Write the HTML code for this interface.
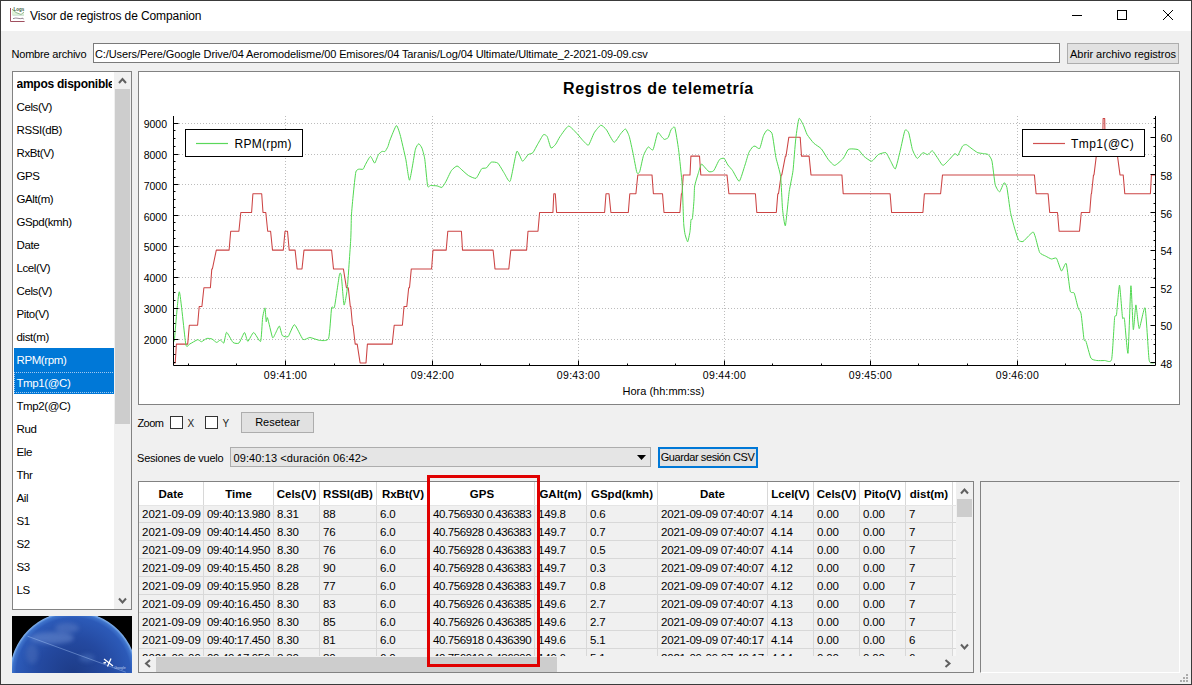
<!DOCTYPE html>
<html><head><meta charset="utf-8"><style>
*{box-sizing:border-box}
html,body{margin:0;padding:0}
body{width:1192px;height:685px;overflow:hidden;position:relative;background:#f0f0f0;font-family:"Liberation Sans",sans-serif;color:#000}
.a{position:absolute}
.t{position:absolute;white-space:nowrap;font-size:11px;line-height:13px}
.tk{font-family:"Liberation Sans",sans-serif;font-size:10.5px;fill:#000}
.tx{letter-spacing:0.3px}
.ttl{font-family:"Liberation Sans",sans-serif;font-size:16px;font-weight:bold;fill:#000;letter-spacing:0.6px}
.lg{font-family:"Liberation Sans",sans-serif;font-size:12px;fill:#000}
.li{position:absolute;left:0;width:101px;height:23px;line-height:23px;padding-left:2.5px;padding-top:1px;font-size:11.5px;letter-spacing:-0.4px;white-space:nowrap;overflow:hidden}
.li.hd{letter-spacing:-0.25px;font-size:12px}
.li.hd{font-weight:bold}
.li.sel{background:#0078d7;color:#fff}
.th{position:absolute;top:0;height:23px;line-height:23px;padding-top:1px;text-align:center;font-weight:bold;font-size:11.5px;white-space:nowrap;background:#fff}
.td{position:absolute;height:17px;line-height:17px;padding-left:3px;padding-top:1px;font-size:11.5px;white-space:nowrap;overflow:hidden;letter-spacing:-0.2px}
.vg{position:absolute;top:0;width:1px;height:180px;background:#d8d8d8}
.hg{position:absolute;left:0;width:817px;height:1px;background:#d8d8d8}
.sb{position:absolute;background:#f0f0f0}
.btn{position:absolute;background:#e1e1e1;border:1px solid #adadad;font-size:11px;text-align:center;white-space:nowrap}
</style></head><body>
<!-- window border -->
<div class="a" style="left:0;top:0;width:1192px;height:685px;border:1px solid #3a3a3a"></div>
<!-- title bar -->
<div class="a" style="left:1px;top:1px;width:1190px;height:30px;background:#fff"></div>
<svg class="a" style="left:0;top:0" width="1192" height="40">
  <path d="M12,9 L16,12.5 L21,14.5 L24,12 L24,15 L12,15Z" fill="#d8f0d0" opacity="0.8"/>
  <path d="M12,9 L16,12.5 L21,14.5 L24,12" stroke="#6a9a6a" fill="none" stroke-width="0.7"/>
  <text x="13.5" y="11.3" style="font-family:'Liberation Sans';font-size:4.5px;font-weight:bold" fill="#3a5a3a">Logs</text>
  <path d="M12.5,15.3 L24,15.3" stroke="#b8d0c0" fill="none" stroke-width="0.7"/>
  <path d="M13,18.6 Q16,17.6 18,18.3 T23,18.2 L23.5,19.3" stroke="#6a5868" fill="none" stroke-width="0.7"/>
  <path d="M10.5,8 V21.5 H24.6" stroke="#a05060" fill="none" stroke-width="1"/>
  <path d="M1072,15.5 H1082" stroke="#000" stroke-width="1"/>
  <rect x="1117.5" y="10.5" width="9" height="9" fill="none" stroke="#000" stroke-width="1"/>
  <path d="M1163,10 L1173,20 M1173,10 L1163,20" stroke="#000" stroke-width="1"/>
</svg>
<div class="t" style="left:30px;top:9px;font-size:12px;line-height:14px;letter-spacing:-0.1px">Visor de registros de Companion</div>

<!-- file row -->
<div class="t" style="left:11.5px;top:48px;letter-spacing:-0.2px">Nombre archivo</div>
<div class="a" style="left:93px;top:43px;width:967px;height:20px;background:#fff;border:1px solid #7a7a7a"></div>
<div class="t" style="left:95px;top:48px;letter-spacing:-0.1px">C:/Users/Pere/Google Drive/04 Aeromodelisme/00 Emisores/04 Taranis/Log/04 Ultimate/Ultimate_2-2021-09-09.csv</div>
<div class="btn" style="left:1067px;top:43px;width:112px;height:21px;line-height:21px;letter-spacing:-0.05px">Abrir archivo registros</div>

<!-- list -->
<div class="a" style="left:12px;top:71px;width:120px;height:539px;background:#fff;border:1px solid #828282;overflow:hidden">
 <div class="a" style="left:1px;top:0;width:101px;height:537px;overflow:hidden">
<div class="li hd" style="top:0px"><span style="display:inline-block;width:95px;overflow:hidden;vertical-align:top">ampos disponible</span></div>
<div class="li" style="top:23px">Cels(V)</div>
<div class="li" style="top:46px">RSSI(dB)</div>
<div class="li" style="top:69px">RxBt(V)</div>
<div class="li" style="top:92px">GPS</div>
<div class="li" style="top:115px">GAlt(m)</div>
<div class="li" style="top:138px">GSpd(kmh)</div>
<div class="li" style="top:161px">Date</div>
<div class="li" style="top:184px">Lcel(V)</div>
<div class="li" style="top:207px">Cels(V)</div>
<div class="li" style="top:230px">Pito(V)</div>
<div class="li" style="top:253px">dist(m)</div>
<div class="li sel" style="top:276px">RPM(rpm)</div>
<div class="li sel" style="top:299px">Tmp1(@C)</div>
<div class="a" style="left:0;top:300px;width:101px;height:21px;border:1px dotted #a0c8f0"></div>
<div class="li" style="top:322px">Tmp2(@C)</div>
<div class="li" style="top:345px">Rud</div>
<div class="li" style="top:368px">Ele</div>
<div class="li" style="top:391px">Thr</div>
<div class="li" style="top:414px">Ail</div>
<div class="li" style="top:437px">S1</div>
<div class="li" style="top:460px">S2</div>
<div class="li" style="top:483px">S3</div>
<div class="li" style="top:506px">LS</div>
<div class="li" style="top:529px">SA</div>
 </div>
 <div class="sb" style="left:101px;top:0;width:17px;height:537px"></div>
 <div class="a" style="left:102px;top:17px;width:15px;height:335px;background:#cdcdcd"></div>
 <svg class="a" style="left:101px;top:0" width="17" height="537">
  <path d="M5,11 L8.5,7 L12,11" stroke="#606060" stroke-width="2" fill="none"/>
  <path d="M5,526.5 L8.5,530.5 L12,526.5" stroke="#606060" stroke-width="2" fill="none"/>
 </svg>
</div>
<!-- globe -->
<svg class="a" style="left:12px;top:616px" width="120" height="57">
 <defs>
  <radialGradient id="gl" cx="61.4" cy="59" r="63.7" gradientUnits="userSpaceOnUse">
   <stop offset="0" stop-color="#1d3b86"/>
   <stop offset="0.55" stop-color="#2449a0"/>
   <stop offset="0.9" stop-color="#2c5ab8"/>
   <stop offset="0.96" stop-color="#3f74cc"/>
   <stop offset="1" stop-color="#8cbcf4"/>
  </radialGradient>
  <filter id="bl" x="-50%" y="-50%" width="200%" height="200%"><feGaussianBlur stdDeviation="2"/></filter>
  <clipPath id="gc"><circle cx="61.4" cy="59" r="63"/></clipPath>
 </defs>
 <rect width="120" height="57" fill="#000"/>
 <circle cx="61.4" cy="59" r="63.7" fill="url(#gl)"/>
 <g clip-path="url(#gc)" filter="url(#bl)" opacity="0.55">
  <ellipse cx="40" cy="22" rx="22" ry="6" fill="#6a8cd0"/>
  <ellipse cx="55" cy="12" rx="12" ry="5" fill="#5a7cc4"/>
  <ellipse cx="20" cy="38" rx="6" ry="10" fill="#4a6cb8"/>
  <ellipse cx="75" cy="42" rx="8" ry="4" fill="#4a70bc"/>
 </g>
 <path d="M15.6,20.2 L113.8,56.2" stroke="#b0d0ff" stroke-width="0.5" opacity="0.8"/>
 <path d="M92,43 L101,50 M95.5,50.5 L99,42.5 M91.5,47 L94,46.5" stroke="#fff" stroke-width="1.3"/>
 <text x="108" y="53" style="font-family:'Liberation Sans';font-size:3.5px" fill="#c0d0f0" text-anchor="middle">Google</text>
</svg>

<!-- chart -->
<svg class="a" style="left:0;top:0" width="1192" height="685">
<rect x="138.5" y="71.5" width="1041" height="333" fill="#fff" stroke="#828282" stroke-width="1"/>
<line x1="285.5" y1="116" x2="285.5" y2="365.5" stroke="#bcbcbc" stroke-width="1" stroke-dasharray="1,2"/>
<line x1="432.5" y1="116" x2="432.5" y2="365.5" stroke="#bcbcbc" stroke-width="1" stroke-dasharray="1,2"/>
<line x1="578.5" y1="116" x2="578.5" y2="365.5" stroke="#bcbcbc" stroke-width="1" stroke-dasharray="1,2"/>
<line x1="724.5" y1="116" x2="724.5" y2="365.5" stroke="#bcbcbc" stroke-width="1" stroke-dasharray="1,2"/>
<line x1="870.5" y1="116" x2="870.5" y2="365.5" stroke="#bcbcbc" stroke-width="1" stroke-dasharray="1,2"/>
<line x1="1017.5" y1="116" x2="1017.5" y2="365.5" stroke="#bcbcbc" stroke-width="1" stroke-dasharray="1,2"/>
<line x1="173" y1="123.5" x2="1155.5" y2="123.5" stroke="#bcbcbc" stroke-width="1" stroke-dasharray="1,2"/>
<line x1="173" y1="154.5" x2="1155.5" y2="154.5" stroke="#bcbcbc" stroke-width="1" stroke-dasharray="1,2"/>
<line x1="173" y1="184.5" x2="1155.5" y2="184.5" stroke="#bcbcbc" stroke-width="1" stroke-dasharray="1,2"/>
<line x1="173" y1="215.5" x2="1155.5" y2="215.5" stroke="#bcbcbc" stroke-width="1" stroke-dasharray="1,2"/>
<line x1="173" y1="246.5" x2="1155.5" y2="246.5" stroke="#bcbcbc" stroke-width="1" stroke-dasharray="1,2"/>
<line x1="173" y1="277.5" x2="1155.5" y2="277.5" stroke="#bcbcbc" stroke-width="1" stroke-dasharray="1,2"/>
<line x1="173" y1="308.5" x2="1155.5" y2="308.5" stroke="#bcbcbc" stroke-width="1" stroke-dasharray="1,2"/>
<line x1="173" y1="339.5" x2="1155.5" y2="339.5" stroke="#bcbcbc" stroke-width="1" stroke-dasharray="1,2"/>
<path d="M173.5,362.9 L175.2,362.9 L176.4,344.1 L187.7,344.1 L189.3,325.3 L197.6,325.3 L199.2,306.5 L201.9,306.5 L203.9,287.7 L210.4,287.7 L211.8,268.9 L212.4,268.9 L216.3,250.1 L229.1,250.1 L230.7,231.3 L238.9,231.3 L240.8,212.5 L251.6,212.5 L252.9,193.7 L261.7,193.7 L263.0,212.5 L265.8,212.5 L267.7,231.3 L270.6,231.3 L272.5,250.1 L283.3,250.1 L285.0,231.3 L287.5,231.3 L289.2,250.1 L295.1,250.1 L297.1,268.9 L302.0,268.9 L304.0,250.1 L331.6,250.1 L333.5,268.9 L343.4,268.9 L346.4,287.7 L348.3,287.7 L350.3,306.5 L350.8,306.5 L352.5,325.3 L353.0,325.3 L355.2,344.1 L357.2,344.1 L360.1,362.9 L366.0,362.9 L367.4,344.1 L392.2,344.1 L394.2,325.3 L402.4,325.3 L404.0,306.5 L406.8,306.5 L408.7,287.7 L409.5,287.7 L411.3,268.9 L431.6,268.9 L433.0,250.1 L446.2,250.1 L447.8,231.3 L461.4,231.3 L462.5,250.1 L493.1,250.1 L495.0,268.9 L508.8,268.9 L510.8,250.1 L526.6,250.1 L528.0,231.3 L538.0,231.3 L539.6,212.5 L552.9,212.5 L553.8,193.7 L555.3,193.7 L556.6,212.5 L604.6,212.5 L606.0,193.7 L609.0,193.7 L610.9,212.5 L628.3,212.5 L629.8,193.7 L635.9,193.7 L637.8,174.9 L652.0,174.9 L653.4,193.7 L662.5,193.7 L664.0,212.5 L679.9,212.5 L681.4,193.7 L682.0,193.7 L683.3,174.9 L690.0,174.9 L690.9,156.1 L699.5,156.1 L700.8,174.9 L727.0,174.9 L728.9,193.7 L755.4,193.7 L756.8,212.5 L776.3,212.5 L777.8,193.7 L778.5,193.7 L781.2,174.9 L781.8,174.9 L785.4,156.1 L786.0,156.1 L788.8,137.3 L800.2,137.3 L801.5,156.1 L809.1,156.1 L811.0,174.9 L841.9,174.9 L843.2,193.7 L890.1,193.7 L891.6,212.5 L922.9,212.5 L924.4,193.7 L940.6,193.7 L942.5,174.9 L1034.4,174.9 L1036.1,193.7 L1048.1,193.7 L1049.7,212.5 L1057.5,212.5 L1059.1,231.3 L1079.5,231.3 L1081.3,212.5 L1089.7,212.5 L1091.2,193.7 L1091.5,193.7 L1093.5,174.9 L1094.0,174.9 L1096.3,156.1 L1097.0,156.1 L1102.6,137.3 L1102.8,137.3 L1103.1,118.5 L1104.7,118.5 L1105.0,137.3 L1105.2,137.3 L1117.0,156.1 L1117.5,156.1 L1120.0,174.9 L1123.2,174.9 L1124.8,193.7 L1150.4,193.7 L1151.4,174.9 L1155.0,174.9" fill="none" stroke="#cc4444" stroke-width="1.05" stroke-linejoin="round"/>
<path d="M174.3,341.4C174.8,336.9 178.2,291.5 179.3,291.8C180.4,292.1 184.8,339.5 185.8,344.3C186.8,349.1 188.6,344.4 189.7,344.0C190.8,343.6 196.5,339.9 197.6,339.7C198.7,339.5 200.7,341.8 201.5,341.7C202.3,341.6 205.8,338.6 206.8,338.4C207.8,338.2 211.1,338.6 212.0,339.0C212.9,339.4 215.8,342.3 216.6,342.4C217.4,342.5 219.8,339.9 220.5,340.0C221.2,340.1 223.2,343.7 223.8,343.0C224.4,342.3 225.8,332.4 226.6,332.3C227.4,332.2 231.9,341.4 233.0,342.4C234.1,343.4 237.9,343.9 239.0,343.0C240.1,342.1 243.7,332.6 244.5,332.5C245.3,332.4 247.0,341.4 247.8,341.4C248.6,341.4 252.5,332.5 253.7,332.5C254.9,332.5 259.8,342.7 260.6,341.4C261.4,340.1 262.2,320.9 262.6,317.8C263.0,314.7 264.7,307.5 265.0,307.9C265.3,308.3 266.0,320.8 266.2,321.7C266.4,322.6 266.9,316.4 267.5,317.8C268.1,319.2 271.8,336.1 272.5,337.5C273.2,338.9 274.8,334.6 275.4,333.5C276.0,332.4 278.8,325.8 279.4,326.0C280.0,326.2 281.5,334.5 282.3,335.5C283.1,336.5 287.1,337.5 288.2,336.5C289.3,335.5 293.1,324.4 294.5,324.7C295.9,325.0 301.6,338.2 303.0,339.4C304.4,340.6 308.4,337.4 309.9,337.5C311.4,337.6 318.1,340.3 319.8,340.4C321.5,340.5 327.5,341.4 328.6,338.4C329.7,335.4 331.1,310.8 331.6,307.9C332.1,305.0 333.8,310.0 334.5,306.9C335.2,303.8 338.9,277.2 339.5,274.4C340.1,271.6 341.0,273.6 341.4,276.4C341.8,279.2 343.5,303.9 344.0,305.0C344.5,306.1 346.7,294.2 347.3,288.2C347.9,282.2 350.3,246.6 350.7,240.0C351.1,233.4 351.2,220.1 351.4,215.9C351.6,211.7 352.9,198.0 353.3,194.0C353.7,190.0 355.3,174.4 355.8,172.1C356.3,169.8 358.0,169.5 358.7,169.2C359.4,168.9 362.5,169.6 363.1,169.2C363.7,168.8 364.6,166.0 365.3,164.8C366.0,163.6 369.5,156.6 370.4,156.4C371.3,156.2 374.0,163.3 374.7,163.1C375.4,162.9 377.7,155.7 378.4,154.6C379.1,153.5 381.4,151.7 382.0,151.4C382.6,151.1 384.5,151.9 385.0,151.5C385.5,151.1 387.4,147.7 387.9,146.6C388.4,145.5 389.2,141.9 390.0,140.0C390.8,138.1 395.4,126.1 396.3,125.6C397.2,125.1 399.2,131.6 400.1,134.7C401.0,137.8 404.9,155.1 405.8,159.3C406.7,163.5 408.7,181.1 409.6,180.2C410.5,179.3 414.5,153.1 415.3,149.8C416.1,146.5 418.1,144.0 418.7,143.8C419.3,143.6 421.3,146.6 421.9,148.0C422.5,149.4 424.3,155.8 424.8,159.3C425.3,162.8 427.1,183.5 427.6,185.9C428.1,188.3 429.6,185.5 430.5,185.5C431.4,185.5 436.1,185.7 437.1,185.9C438.1,186.1 441.1,187.7 441.9,187.4C442.7,187.1 444.7,183.6 445.6,182.1C446.5,180.6 450.3,172.2 451.3,170.7C452.3,169.2 456.0,166.1 457.0,166.0C458.0,165.9 460.8,168.9 461.8,169.8C462.8,170.7 467.1,174.7 468.4,175.5C469.7,176.3 474.8,178.9 476.0,178.3C477.2,177.7 480.7,169.8 481.7,168.8C482.7,167.8 485.5,168.5 486.4,167.9C487.3,167.3 490.2,162.6 491.2,162.2C492.2,161.8 496.6,162.1 497.8,163.1C499.0,164.1 503.4,171.9 504.5,173.6C505.6,175.3 509.1,183.2 510.2,181.2C511.3,179.2 515.7,153.2 516.8,151.4C517.9,149.6 521.5,160.9 522.5,161.2C523.5,161.5 527.2,155.4 528.2,154.6C529.2,153.8 532.0,153.7 532.9,152.7C533.8,151.7 536.7,145.8 537.7,144.2C538.7,142.5 542.5,135.4 543.4,134.7C544.3,134.0 546.5,135.4 547.2,136.6C547.9,137.8 550.2,147.3 551.0,148.0C551.8,148.7 554.9,145.2 555.7,144.2C556.5,143.2 558.8,138.3 560.0,136.6C561.2,134.9 566.9,126.4 568.5,126.1C570.1,125.8 575.8,132.4 577.1,133.7C578.4,135.0 581.8,139.4 582.8,140.4C583.8,141.4 587.5,145.8 588.5,145.1C589.5,144.4 593.1,134.6 594.2,132.8C595.3,131.0 599.7,125.5 600.8,125.2C601.9,124.9 605.3,128.3 606.5,129.9C607.7,131.5 612.8,142.0 614.1,142.3C615.4,142.6 619.7,134.9 620.7,133.7C621.7,132.5 624.7,128.7 625.5,129.0C626.3,129.3 628.6,134.3 629.3,136.6C630.0,138.9 632.4,150.3 633.1,153.6C633.8,156.9 636.3,170.9 636.9,172.6C637.5,174.3 639.1,173.3 639.7,171.7C640.3,170.1 642.7,157.8 643.5,155.5C644.3,153.2 647.3,147.5 648.2,147.0C649.1,146.5 652.1,151.1 653.0,149.8C653.9,148.5 656.9,134.0 657.7,132.8C658.5,131.6 660.9,136.0 661.5,136.6C662.1,137.2 663.8,139.3 664.4,139.4C665.0,139.5 667.6,138.4 668.2,137.5C668.8,136.6 670.4,130.8 671.0,129.9C671.6,129.0 674.1,125.7 674.8,127.5C675.5,129.3 677.9,144.5 678.6,149.8C679.3,155.1 681.7,178.2 682.2,185.0C682.7,191.8 683.4,219.1 683.7,223.6C684.0,228.1 684.7,232.8 685.1,234.5C685.5,236.2 687.3,242.1 687.7,241.8C688.1,241.5 689.7,233.5 690.0,231.5C690.3,229.5 690.8,220.9 691.0,219.7C691.2,218.5 692.1,220.5 692.4,218.7C692.7,216.9 693.8,203.0 694.0,200.0C694.2,197.0 694.3,188.4 694.7,185.9C695.1,183.4 697.9,174.6 698.5,172.6C699.1,170.6 700.9,164.6 701.4,164.1C701.9,163.6 703.8,166.3 704.5,167.0C705.2,167.7 708.2,171.4 709.0,171.7C709.8,172.0 712.7,171.8 713.7,170.7C714.7,169.6 718.4,160.8 719.4,159.7C720.4,158.6 723.3,157.9 724.1,158.4C724.9,158.9 727.1,163.9 727.9,165.0C728.7,166.1 731.7,169.2 732.7,170.7C733.7,172.2 738.2,181.7 739.3,181.2C740.4,180.7 744.1,167.6 745.0,165.0C745.9,162.4 748.1,154.3 748.8,152.7C749.5,151.0 752.0,147.6 752.6,147.0C753.2,146.4 754.3,146.0 755.0,146.1C755.7,146.2 758.9,149.5 759.7,148.5C760.5,147.5 762.8,137.3 763.5,135.6C764.2,133.9 766.5,130.1 767.3,129.9C768.1,129.7 771.3,131.2 772.1,133.7C772.9,136.2 775.1,153.5 775.9,157.4C776.7,161.3 780.0,171.7 780.6,176.4C781.2,181.1 782.1,204.2 782.5,208.7C782.9,213.2 784.8,227.3 785.4,225.7C786.0,224.1 788.5,196.6 789.2,191.6C789.9,186.6 792.4,175.6 793.0,170.7C793.6,165.8 795.2,143.3 795.8,138.5C796.3,133.7 798.3,119.7 799.0,118.5C799.7,117.3 802.6,123.7 803.4,125.2C804.2,126.7 806.2,133.0 807.2,134.7C808.2,136.3 812.5,141.9 813.8,143.2C815.1,144.5 820.1,147.4 821.4,148.9C822.7,150.4 826.9,157.8 828.1,159.3C829.3,160.8 833.3,165.5 834.7,165.4C836.1,165.3 842.0,159.8 843.2,158.4C844.4,157.0 847.2,150.7 848.0,149.8C848.8,148.9 850.8,148.9 851.8,148.9C852.8,148.9 857.3,149.1 858.4,149.8C859.5,150.5 862.9,155.5 864.1,156.5C865.3,157.5 870.4,161.4 871.7,161.2C873.0,161.0 877.0,155.4 878.3,154.6C879.6,153.8 884.8,152.1 885.9,152.7C887.0,153.3 889.8,159.7 890.7,161.2C891.6,162.7 894.5,169.8 895.4,168.8C896.3,167.8 899.3,154.3 900.2,150.8C901.1,147.3 904.1,132.2 904.9,130.5C905.7,128.8 908.0,131.0 908.7,132.8C909.4,134.6 911.7,147.5 912.5,149.8C913.3,152.1 916.2,158.1 917.2,158.4C918.2,158.7 921.9,153.0 922.9,152.7C923.9,152.4 926.8,154.8 927.7,154.6C928.6,154.4 931.5,150.5 932.4,150.8C933.3,151.1 936.2,156.1 937.2,157.4C938.2,158.7 941.8,165.2 942.9,165.4C944.0,165.6 948.4,160.4 949.5,159.3C950.6,158.2 954.2,153.9 955.0,153.6C955.8,153.3 957.1,156.2 957.8,155.5C958.5,154.8 961.8,147.0 962.6,146.0C963.4,145.0 965.5,144.4 966.4,144.7C967.3,145.0 971.1,148.2 972.1,148.9C973.1,149.6 976.8,152.3 977.8,152.7C978.8,153.1 982.5,153.4 983.5,153.6C984.5,153.8 987.4,153.9 988.2,154.6C989.0,155.3 991.4,158.4 992.0,161.2C992.6,163.9 994.5,181.8 995.2,184.6C995.9,187.4 998.8,192.1 999.6,191.9C1000.4,191.7 1003.3,183.2 1004.0,182.8C1004.7,182.4 1006.3,184.8 1006.9,187.5C1007.5,190.2 1009.8,208.7 1010.5,212.3C1011.2,215.9 1013.5,224.4 1014.2,226.9C1014.9,229.4 1017.8,238.8 1018.6,240.1C1019.4,241.4 1022.1,241.9 1023.0,241.5C1023.9,241.1 1027.9,236.6 1028.8,235.7C1029.7,234.8 1032.6,231.9 1033.2,232.0C1033.8,232.1 1034.8,235.3 1035.4,237.2C1036.0,239.1 1038.8,250.8 1039.7,252.5C1040.6,254.2 1044.5,255.5 1045.6,256.1C1046.7,256.7 1050.4,258.8 1051.4,259.0C1052.4,259.2 1055.6,257.2 1056.5,258.3C1057.4,259.4 1060.6,270.5 1061.5,271.0C1062.4,271.5 1065.4,261.7 1066.2,263.5C1067.0,265.3 1069.5,288.4 1070.2,291.1C1070.9,293.8 1073.5,291.6 1074.2,293.1C1074.9,294.6 1077.5,306.0 1078.1,307.9C1078.7,309.8 1080.6,310.9 1081.1,313.8C1081.6,316.7 1083.6,336.9 1084.0,339.4C1084.4,341.9 1085.4,339.7 1086.0,341.4C1086.6,343.1 1089.9,356.3 1090.9,358.1C1091.9,359.9 1095.5,360.3 1096.8,360.5C1098.1,360.7 1103.3,360.6 1104.7,360.5C1106.1,360.4 1110.7,363.4 1111.6,359.5C1112.5,355.6 1114.2,321.8 1114.6,317.7C1115.0,313.6 1116.1,317.8 1116.5,314.8C1116.9,311.8 1119.0,284.9 1119.5,285.2C1120.0,285.5 1122.1,314.6 1122.5,317.7C1122.9,320.8 1123.9,315.4 1124.4,318.7C1124.9,322.0 1127.4,356.2 1128.0,353.2C1128.6,350.2 1130.4,288.0 1130.9,285.8C1131.4,283.6 1132.8,327.8 1133.3,329.6C1133.8,331.4 1135.4,305.0 1135.9,304.9C1136.4,304.8 1138.4,328.3 1139.2,328.6C1140.0,328.9 1144.2,305.1 1145.1,307.9C1146.0,310.7 1148.4,354.0 1149.0,359.1C1149.6,364.2 1151.5,362.7 1152.0,363.0C1152.5,363.3 1154.7,362.6 1155.0,362.6" fill="none" stroke="#50d850" stroke-width="1" stroke-linejoin="round"/>
<path d="M173.5,116V365.5H1155.5V116M173.5,362.5h2M173.5,354.5h2M173.5,346.5h2M173.5,339.5h5M173.5,331.5h2M173.5,323.5h2M173.5,315.5h2M173.5,308.5h5M173.5,300.5h2M173.5,292.5h2M173.5,284.5h2M173.5,277.5h5M173.5,269.5h2M173.5,261.5h2M173.5,253.5h2M173.5,246.5h5M173.5,238.5h2M173.5,230.5h2M173.5,222.5h2M173.5,215.5h5M173.5,207.5h2M173.5,199.5h2M173.5,191.5h2M173.5,184.5h5M173.5,177.5h2M173.5,169.5h2M173.5,161.5h2M173.5,154.5h5M173.5,146.5h2M173.5,138.5h2M173.5,130.5h2M173.5,123.5h5M1155.5,362.5h-5M1155.5,353.5h-2M1155.5,344.5h-2M1155.5,334.5h-2M1155.5,325.5h-5M1155.5,315.5h-2M1155.5,306.5h-2M1155.5,297.5h-2M1155.5,287.5h-5M1155.5,278.5h-2M1155.5,268.5h-2M1155.5,259.5h-2M1155.5,250.5h-5M1155.5,240.5h-2M1155.5,231.5h-2M1155.5,221.5h-2M1155.5,212.5h-5M1155.5,203.5h-2M1155.5,193.5h-2M1155.5,184.5h-2M1155.5,174.5h-5M1155.5,165.5h-2M1155.5,156.5h-2M1155.5,146.5h-2M1155.5,137.5h-5M1155.5,127.5h-2M1155.5,118.5h-2M188.5,365.5v-2M236.5,365.5v-2M285.5,365.5v-5M334.5,365.5v-2M383.5,365.5v-2M432.5,365.5v-5M480.5,365.5v-2M529.5,365.5v-2M578.5,365.5v-5M627.5,365.5v-2M675.5,365.5v-2M724.5,365.5v-5M772.5,365.5v-2M821.5,365.5v-2M870.5,365.5v-5M918.5,365.5v-2M967.5,365.5v-2M1017.5,365.5v-5M1065.5,365.5v-2M1114.5,365.5v-2" fill="none" stroke="#000" stroke-width="1"/>
<text x="167" y="128.2" text-anchor="end" class="tk">9000</text>
<text x="167" y="159.0" text-anchor="end" class="tk">8000</text>
<text x="167" y="189.8" text-anchor="end" class="tk">7000</text>
<text x="167" y="220.6" text-anchor="end" class="tk">6000</text>
<text x="167" y="251.4" text-anchor="end" class="tk">5000</text>
<text x="167" y="282.2" text-anchor="end" class="tk">4000</text>
<text x="167" y="313.0" text-anchor="end" class="tk">3000</text>
<text x="167" y="343.8" text-anchor="end" class="tk">2000</text>
<text x="1160.5" y="367.9" class="tk">48</text>
<text x="1160.5" y="330.3" class="tk">50</text>
<text x="1160.5" y="292.7" class="tk">52</text>
<text x="1160.5" y="255.1" class="tk">54</text>
<text x="1160.5" y="217.5" class="tk">56</text>
<text x="1160.5" y="179.9" class="tk">58</text>
<text x="1160.5" y="142.3" class="tk">60</text>
<text x="285.5" y="378.5" text-anchor="middle" class="tk tx">09:41:00</text>
<text x="432.5" y="378.5" text-anchor="middle" class="tk tx">09:42:00</text>
<text x="578.5" y="378.5" text-anchor="middle" class="tk tx">09:43:00</text>
<text x="724.5" y="378.5" text-anchor="middle" class="tk tx">09:44:00</text>
<text x="870.5" y="378.5" text-anchor="middle" class="tk tx">09:45:00</text>
<text x="1017.5" y="378.5" text-anchor="middle" class="tk tx">09:46:00</text>
<text x="663.5" y="395.2" text-anchor="middle" class="tk" style="font-size:11px">Hora (hh:mm:ss)</text>
<text x="658.5" y="93.7" text-anchor="middle" class="ttl">Registros de telemetría</text>
<rect x="185.5" y="129.5" width="117" height="27" fill="#fff" stroke="#000"/>
<line x1="196" y1="143.5" x2="228" y2="143.5" stroke="#5ad85a" stroke-width="1.2"/>
<text x="234.5" y="147.7" class="lg" style="letter-spacing:0.25px">RPM(rpm)</text>
<rect x="1022.5" y="129.5" width="122" height="27" fill="#fff" stroke="#000"/>
<line x1="1033" y1="143.5" x2="1065" y2="143.5" stroke="#d05050" stroke-width="1.2"/>
<text x="1071" y="147.7" class="lg" style="letter-spacing:0.45px">Tmp1(@C)</text>
</svg>

<!-- zoom row -->
<div class="t" style="left:137.5px;top:417px;letter-spacing:-0.6px">Zoom</div>
<div class="a" style="left:170px;top:416px;width:13px;height:13px;background:#fff;border:1px solid #333"></div>
<div class="t" style="left:187.5px;top:417px;font-size:10px;color:#222">X</div>
<div class="a" style="left:205px;top:416px;width:13px;height:13px;background:#fff;border:1px solid #333"></div>
<div class="t" style="left:222.5px;top:417px;font-size:10px;color:#222">Y</div>
<div class="btn" style="left:241px;top:412px;width:73px;height:21px;line-height:19px">Resetear</div>

<!-- sesiones row -->
<div class="t" style="left:137px;top:452px;letter-spacing:-0.2px">Sesiones de vuelo</div>
<div class="a" style="left:230px;top:447px;width:421px;height:20px;background:#e5e5e5;border:1px solid #adadad"></div>
<div class="t" style="left:233.5px;top:452px;letter-spacing:0.1px">09:40:13 &lt;duración 06:42&gt;</div>
<svg class="a" style="left:636px;top:454px" width="12" height="7"><path d="M1,1 L10,1 L5.5,6Z" fill="#000"/></svg>
<div class="btn" style="left:658px;top:447px;width:100px;height:21px;line-height:17px;border:2px solid #0078d7;letter-spacing:-0.4px;padding-right:1px">Guardar sesión CSV</div>

<!-- table -->
<div class="a" style="left:138px;top:481px;width:836px;height:192px;background:#f0f0f0;border:1px solid #828282;overflow:hidden">
 <div class="a" style="left:0;top:0;width:817px;height:23px;background:#fff"></div>
 <div class="a" style="left:814px;top:23px;width:3px;height:151px;background:#f6f6f6"></div>
 <div class="a" style="left:0;top:0;width:817px;height:174px;overflow:hidden">
<div class="th" style="left:0px;width:64px">Date</div>
<div class="vg" style="left:64px"></div>
<div class="th" style="left:65px;width:69px">Time</div>
<div class="vg" style="left:134px"></div>
<div class="th" style="left:135px;width:45px">Cels(V)</div>
<div class="vg" style="left:180px"></div>
<div class="th" style="left:181px;width:56px">RSSI(dB)</div>
<div class="vg" style="left:237px"></div>
<div class="th" style="left:238px;width:52px">RxBt(V)</div>
<div class="vg" style="left:290px"></div>
<div class="th" style="left:291px;width:104px">GPS</div>
<div class="vg" style="left:395px"></div>
<div class="th" style="left:396px;width:51px">GAlt(m)</div>
<div class="vg" style="left:447px"></div>
<div class="th" style="left:448px;width:70px">GSpd(kmh)</div>
<div class="vg" style="left:518px"></div>
<div class="th" style="left:519px;width:109px">Date</div>
<div class="vg" style="left:628px"></div>
<div class="th" style="left:629px;width:45px">Lcel(V)</div>
<div class="vg" style="left:674px"></div>
<div class="th" style="left:675px;width:45px">Cels(V)</div>
<div class="vg" style="left:720px"></div>
<div class="th" style="left:721px;width:45px">Pito(V)</div>
<div class="vg" style="left:766px"></div>
<div class="th" style="left:767px;width:46px">dist(m)</div>
<div class="vg" style="left:813px"></div>
<div class="td" style="left:0px;top:23px;width:64px;letter-spacing:0px">2021-09-09</div>
<div class="td" style="left:65px;top:23px;width:69px;letter-spacing:-0.35px">09:40:13.980</div>
<div class="td" style="left:135px;top:23px;width:45px">8.31</div>
<div class="td" style="left:181px;top:23px;width:56px">88</div>
<div class="td" style="left:238px;top:23px;width:52px">6.0</div>
<div class="td" style="left:291px;top:23px;width:104px;letter-spacing:-0.4px">40.756930 0.436383</div>
<div class="td" style="left:396px;top:23px;width:51px">149.8</div>
<div class="td" style="left:448px;top:23px;width:70px">0.6</div>
<div class="td" style="left:519px;top:23px;width:109px">2021-09-09 07:40:07</div>
<div class="td" style="left:629px;top:23px;width:45px">4.14</div>
<div class="td" style="left:675px;top:23px;width:45px">0.00</div>
<div class="td" style="left:721px;top:23px;width:45px">0.00</div>
<div class="td" style="left:767px;top:23px;width:46px">7</div>
<div class="hg" style="top:40px"></div>
<div class="td" style="left:0px;top:41px;width:64px;letter-spacing:0px">2021-09-09</div>
<div class="td" style="left:65px;top:41px;width:69px;letter-spacing:-0.35px">09:40:14.450</div>
<div class="td" style="left:135px;top:41px;width:45px">8.30</div>
<div class="td" style="left:181px;top:41px;width:56px">76</div>
<div class="td" style="left:238px;top:41px;width:52px">6.0</div>
<div class="td" style="left:291px;top:41px;width:104px;letter-spacing:-0.4px">40.756928 0.436383</div>
<div class="td" style="left:396px;top:41px;width:51px">149.7</div>
<div class="td" style="left:448px;top:41px;width:70px">0.7</div>
<div class="td" style="left:519px;top:41px;width:109px">2021-09-09 07:40:07</div>
<div class="td" style="left:629px;top:41px;width:45px">4.14</div>
<div class="td" style="left:675px;top:41px;width:45px">0.00</div>
<div class="td" style="left:721px;top:41px;width:45px">0.00</div>
<div class="td" style="left:767px;top:41px;width:46px">7</div>
<div class="hg" style="top:58px"></div>
<div class="td" style="left:0px;top:59px;width:64px;letter-spacing:0px">2021-09-09</div>
<div class="td" style="left:65px;top:59px;width:69px;letter-spacing:-0.35px">09:40:14.950</div>
<div class="td" style="left:135px;top:59px;width:45px">8.30</div>
<div class="td" style="left:181px;top:59px;width:56px">76</div>
<div class="td" style="left:238px;top:59px;width:52px">6.0</div>
<div class="td" style="left:291px;top:59px;width:104px;letter-spacing:-0.4px">40.756928 0.436383</div>
<div class="td" style="left:396px;top:59px;width:51px">149.7</div>
<div class="td" style="left:448px;top:59px;width:70px">0.5</div>
<div class="td" style="left:519px;top:59px;width:109px">2021-09-09 07:40:07</div>
<div class="td" style="left:629px;top:59px;width:45px">4.14</div>
<div class="td" style="left:675px;top:59px;width:45px">0.00</div>
<div class="td" style="left:721px;top:59px;width:45px">0.00</div>
<div class="td" style="left:767px;top:59px;width:46px">7</div>
<div class="hg" style="top:76px"></div>
<div class="td" style="left:0px;top:77px;width:64px;letter-spacing:0px">2021-09-09</div>
<div class="td" style="left:65px;top:77px;width:69px;letter-spacing:-0.35px">09:40:15.450</div>
<div class="td" style="left:135px;top:77px;width:45px">8.28</div>
<div class="td" style="left:181px;top:77px;width:56px">90</div>
<div class="td" style="left:238px;top:77px;width:52px">6.0</div>
<div class="td" style="left:291px;top:77px;width:104px;letter-spacing:-0.4px">40.756928 0.436383</div>
<div class="td" style="left:396px;top:77px;width:51px">149.7</div>
<div class="td" style="left:448px;top:77px;width:70px">0.3</div>
<div class="td" style="left:519px;top:77px;width:109px">2021-09-09 07:40:07</div>
<div class="td" style="left:629px;top:77px;width:45px">4.12</div>
<div class="td" style="left:675px;top:77px;width:45px">0.00</div>
<div class="td" style="left:721px;top:77px;width:45px">0.00</div>
<div class="td" style="left:767px;top:77px;width:46px">7</div>
<div class="hg" style="top:94px"></div>
<div class="td" style="left:0px;top:95px;width:64px;letter-spacing:0px">2021-09-09</div>
<div class="td" style="left:65px;top:95px;width:69px;letter-spacing:-0.35px">09:40:15.950</div>
<div class="td" style="left:135px;top:95px;width:45px">8.28</div>
<div class="td" style="left:181px;top:95px;width:56px">77</div>
<div class="td" style="left:238px;top:95px;width:52px">6.0</div>
<div class="td" style="left:291px;top:95px;width:104px;letter-spacing:-0.4px">40.756928 0.436383</div>
<div class="td" style="left:396px;top:95px;width:51px">149.7</div>
<div class="td" style="left:448px;top:95px;width:70px">0.8</div>
<div class="td" style="left:519px;top:95px;width:109px">2021-09-09 07:40:07</div>
<div class="td" style="left:629px;top:95px;width:45px">4.12</div>
<div class="td" style="left:675px;top:95px;width:45px">0.00</div>
<div class="td" style="left:721px;top:95px;width:45px">0.00</div>
<div class="td" style="left:767px;top:95px;width:46px">7</div>
<div class="hg" style="top:112px"></div>
<div class="td" style="left:0px;top:113px;width:64px;letter-spacing:0px">2021-09-09</div>
<div class="td" style="left:65px;top:113px;width:69px;letter-spacing:-0.35px">09:40:16.450</div>
<div class="td" style="left:135px;top:113px;width:45px">8.30</div>
<div class="td" style="left:181px;top:113px;width:56px">83</div>
<div class="td" style="left:238px;top:113px;width:52px">6.0</div>
<div class="td" style="left:291px;top:113px;width:104px;letter-spacing:-0.4px">40.756926 0.436385</div>
<div class="td" style="left:396px;top:113px;width:51px">149.6</div>
<div class="td" style="left:448px;top:113px;width:70px">2.7</div>
<div class="td" style="left:519px;top:113px;width:109px">2021-09-09 07:40:07</div>
<div class="td" style="left:629px;top:113px;width:45px">4.13</div>
<div class="td" style="left:675px;top:113px;width:45px">0.00</div>
<div class="td" style="left:721px;top:113px;width:45px">0.00</div>
<div class="td" style="left:767px;top:113px;width:46px">7</div>
<div class="hg" style="top:130px"></div>
<div class="td" style="left:0px;top:131px;width:64px;letter-spacing:0px">2021-09-09</div>
<div class="td" style="left:65px;top:131px;width:69px;letter-spacing:-0.35px">09:40:16.950</div>
<div class="td" style="left:135px;top:131px;width:45px">8.30</div>
<div class="td" style="left:181px;top:131px;width:56px">85</div>
<div class="td" style="left:238px;top:131px;width:52px">6.0</div>
<div class="td" style="left:291px;top:131px;width:104px;letter-spacing:-0.4px">40.756926 0.436385</div>
<div class="td" style="left:396px;top:131px;width:51px">149.6</div>
<div class="td" style="left:448px;top:131px;width:70px">2.7</div>
<div class="td" style="left:519px;top:131px;width:109px">2021-09-09 07:40:07</div>
<div class="td" style="left:629px;top:131px;width:45px">4.13</div>
<div class="td" style="left:675px;top:131px;width:45px">0.00</div>
<div class="td" style="left:721px;top:131px;width:45px">0.00</div>
<div class="td" style="left:767px;top:131px;width:46px">7</div>
<div class="hg" style="top:148px"></div>
<div class="td" style="left:0px;top:149px;width:64px;letter-spacing:0px">2021-09-09</div>
<div class="td" style="left:65px;top:149px;width:69px;letter-spacing:-0.35px">09:40:17.450</div>
<div class="td" style="left:135px;top:149px;width:45px">8.30</div>
<div class="td" style="left:181px;top:149px;width:56px">81</div>
<div class="td" style="left:238px;top:149px;width:52px">6.0</div>
<div class="td" style="left:291px;top:149px;width:104px;letter-spacing:-0.4px">40.756918 0.436390</div>
<div class="td" style="left:396px;top:149px;width:51px">149.6</div>
<div class="td" style="left:448px;top:149px;width:70px">5.1</div>
<div class="td" style="left:519px;top:149px;width:109px">2021-09-09 07:40:17</div>
<div class="td" style="left:629px;top:149px;width:45px">4.14</div>
<div class="td" style="left:675px;top:149px;width:45px">0.00</div>
<div class="td" style="left:721px;top:149px;width:45px">0.00</div>
<div class="td" style="left:767px;top:149px;width:46px">6</div>
<div class="hg" style="top:166px"></div>
<div class="td" style="left:0px;top:167px;width:64px;letter-spacing:0px">2021-09-09</div>
<div class="td" style="left:65px;top:167px;width:69px;letter-spacing:-0.35px">09:40:17.950</div>
<div class="td" style="left:135px;top:167px;width:45px">8.30</div>
<div class="td" style="left:181px;top:167px;width:56px">80</div>
<div class="td" style="left:238px;top:167px;width:52px">6.0</div>
<div class="td" style="left:291px;top:167px;width:104px;letter-spacing:-0.4px">40.756918 0.436390</div>
<div class="td" style="left:396px;top:167px;width:51px">149.6</div>
<div class="td" style="left:448px;top:167px;width:70px">5.1</div>
<div class="td" style="left:519px;top:167px;width:109px">2021-09-09 07:40:17</div>
<div class="td" style="left:629px;top:167px;width:45px">4.14</div>
<div class="td" style="left:675px;top:167px;width:45px">0.00</div>
<div class="td" style="left:721px;top:167px;width:45px">0.00</div>
<div class="td" style="left:767px;top:167px;width:46px">6</div>
<div class="hg" style="top:184px"></div>
 </div>
 <div class="a" style="left:0;top:23px;width:818px;height:1px;background:#e5e5e5"></div>
 <!-- v scrollbar -->
 <div class="sb" style="left:817px;top:0;width:17px;height:174px"></div>
 <div class="a" style="left:818px;top:17px;width:15px;height:18px;background:#cdcdcd"></div>
 <!-- h scrollbar -->
 <div class="sb" style="left:0;top:174px;width:834px;height:16px"></div>
 <div class="a" style="left:17px;top:175px;width:401px;height:15px;background:#cdcdcd"></div>
 <svg class="a" style="left:0;top:0" width="834" height="190">
  <path d="M822,11.5 L825.5,7.5 L829,11.5" stroke="#606060" stroke-width="2" fill="none"/>
  <path d="M822,162.5 L825.5,166.5 L829,162.5" stroke="#606060" stroke-width="2" fill="none"/>
  <path d="M11,178 L7,181.5 L11,185" stroke="#606060" stroke-width="2" fill="none"/>
  <path d="M806.5,178 L810.5,181.5 L806.5,185" stroke="#606060" stroke-width="2" fill="none"/>
 </svg>
</div>
<!-- red highlight -->
<div class="a" style="left:427px;top:475px;width:113px;height:192px;border:3px solid #e00000"></div>

<!-- right empty panel -->
<div class="a" style="left:980px;top:481px;width:200px;height:192px;border:1px solid #828282;border-right-color:#fff;border-bottom-color:#fff"></div>
<!-- size grip -->
<svg class="a" style="left:1178px;top:673px" width="12" height="12">
 <rect x="8" y="1" width="2" height="2" fill="#ababab"/><rect x="5" y="4" width="2" height="2" fill="#ababab"/><rect x="8" y="4" width="2" height="2" fill="#ababab"/>
 <rect x="2" y="7" width="2" height="2" fill="#ababab"/><rect x="5" y="7" width="2" height="2" fill="#ababab"/><rect x="8" y="7" width="2" height="2" fill="#ababab"/>
</svg>
</body></html>
